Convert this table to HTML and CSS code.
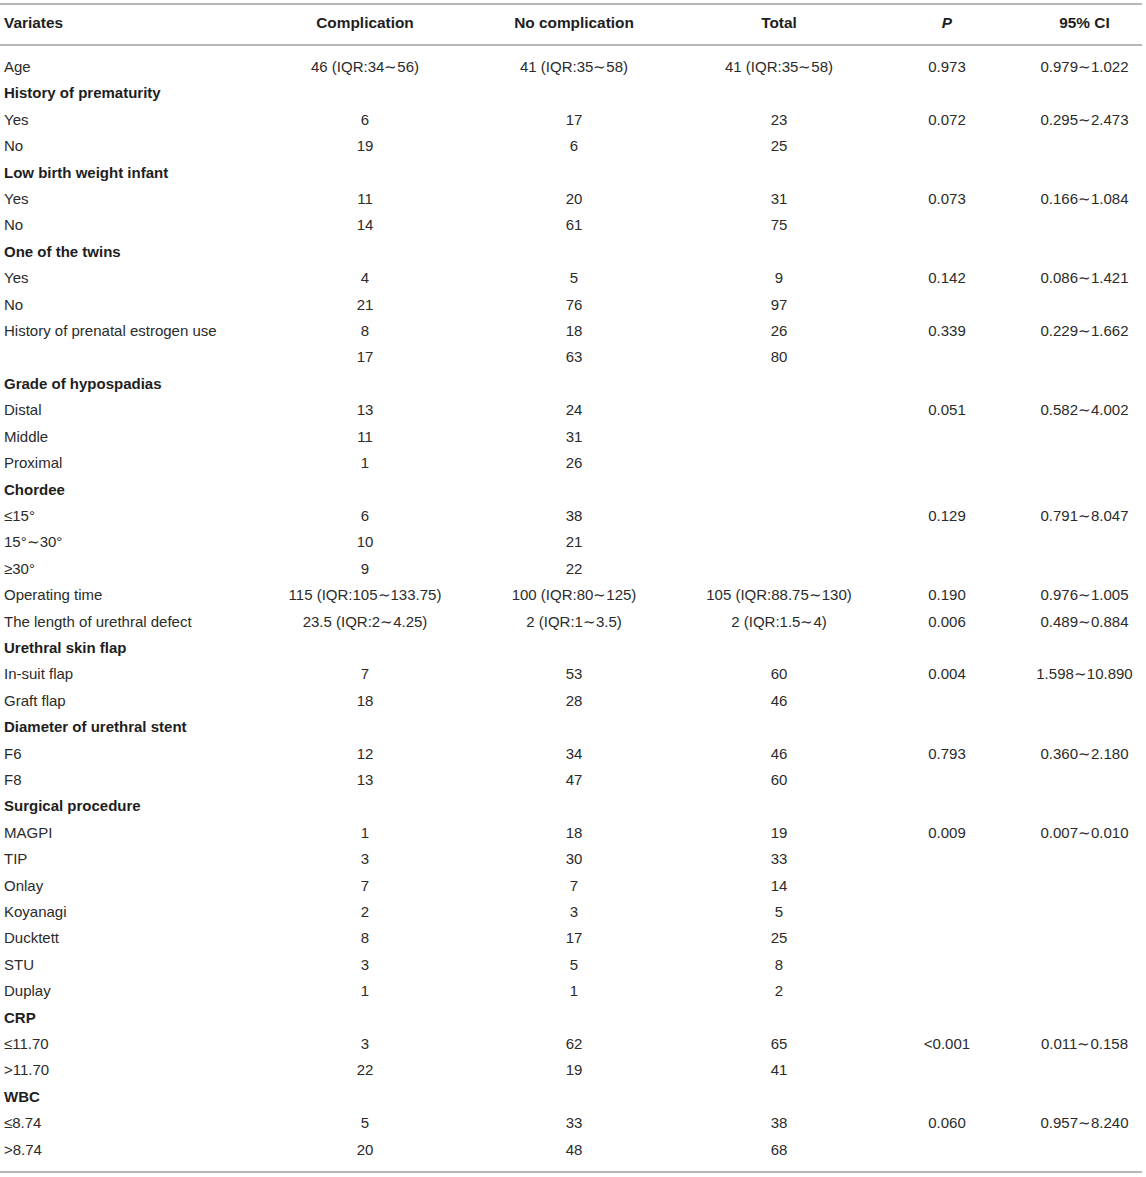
FILE: index.html
```html
<!DOCTYPE html>
<html lang="en">
<head>
<meta charset="utf-8">
<title>Table</title>
<link rel="stylesheet" href="styles.css">
</head>
<body>
<table class="data">
  <colgroup>
    <col class="c-var"><col class="c-comp"><col class="c-nocomp"><col class="c-total"><col class="c-p"><col class="c-ci">
  </colgroup>
  <thead>
    <tr><th class="left">Variates</th><th>Complication</th><th>No complication</th><th>Total</th><th><i>P</i></th><th class="ci">95% CI</th></tr>
  </thead>
  <tbody>
    <tr><td class="left">Age</td><td>46 (IQR:34∼56)</td><td>41 (IQR:35∼58)</td><td>41 (IQR:35∼58)</td><td>0.973</td><td class="ci">0.979∼1.022</td></tr>
    <tr class="group"><td class="left">History of prematurity</td><td></td><td></td><td></td><td></td><td class="ci"></td></tr>
    <tr><td class="left">Yes</td><td>6</td><td>17</td><td>23</td><td>0.072</td><td class="ci">0.295∼2.473</td></tr>
    <tr><td class="left">No</td><td>19</td><td>6</td><td>25</td><td></td><td class="ci"></td></tr>
    <tr class="group"><td class="left">Low birth weight infant</td><td></td><td></td><td></td><td></td><td class="ci"></td></tr>
    <tr><td class="left">Yes</td><td>11</td><td>20</td><td>31</td><td>0.073</td><td class="ci">0.166∼1.084</td></tr>
    <tr><td class="left">No</td><td>14</td><td>61</td><td>75</td><td></td><td class="ci"></td></tr>
    <tr class="group"><td class="left">One of the twins</td><td></td><td></td><td></td><td></td><td class="ci"></td></tr>
    <tr><td class="left">Yes</td><td>4</td><td>5</td><td>9</td><td>0.142</td><td class="ci">0.086∼1.421</td></tr>
    <tr><td class="left">No</td><td>21</td><td>76</td><td>97</td><td></td><td class="ci"></td></tr>
    <tr><td class="left">History of prenatal estrogen use</td><td>8</td><td>18</td><td>26</td><td>0.339</td><td class="ci">0.229∼1.662</td></tr>
    <tr><td class="left"></td><td>17</td><td>63</td><td>80</td><td></td><td class="ci"></td></tr>
    <tr class="group"><td class="left">Grade of hypospadias</td><td></td><td></td><td></td><td></td><td class="ci"></td></tr>
    <tr><td class="left">Distal</td><td>13</td><td>24</td><td></td><td>0.051</td><td class="ci">0.582∼4.002</td></tr>
    <tr><td class="left">Middle</td><td>11</td><td>31</td><td></td><td></td><td class="ci"></td></tr>
    <tr><td class="left">Proximal</td><td>1</td><td>26</td><td></td><td></td><td class="ci"></td></tr>
    <tr class="group"><td class="left">Chordee</td><td></td><td></td><td></td><td></td><td class="ci"></td></tr>
    <tr><td class="left">≤15°</td><td>6</td><td>38</td><td></td><td>0.129</td><td class="ci">0.791∼8.047</td></tr>
    <tr><td class="left">15°∼30°</td><td>10</td><td>21</td><td></td><td></td><td class="ci"></td></tr>
    <tr><td class="left">≥30°</td><td>9</td><td>22</td><td></td><td></td><td class="ci"></td></tr>
    <tr><td class="left">Operating time</td><td>115 (IQR:105∼133.75)</td><td>100 (IQR:80∼125)</td><td>105 (IQR:88.75∼130)</td><td>0.190</td><td class="ci">0.976∼1.005</td></tr>
    <tr><td class="left">The length of urethral defect</td><td>23.5 (IQR:2∼4.25)</td><td>2 (IQR:1∼3.5)</td><td>2 (IQR:1.5∼4)</td><td>0.006</td><td class="ci">0.489∼0.884</td></tr>
    <tr class="group"><td class="left">Urethral skin flap</td><td></td><td></td><td></td><td></td><td class="ci"></td></tr>
    <tr><td class="left">In-suit flap</td><td>7</td><td>53</td><td>60</td><td>0.004</td><td class="ci">1.598∼10.890</td></tr>
    <tr><td class="left">Graft flap</td><td>18</td><td>28</td><td>46</td><td></td><td class="ci"></td></tr>
    <tr class="group"><td class="left">Diameter of urethral stent</td><td></td><td></td><td></td><td></td><td class="ci"></td></tr>
    <tr><td class="left">F6</td><td>12</td><td>34</td><td>46</td><td>0.793</td><td class="ci">0.360∼2.180</td></tr>
    <tr><td class="left">F8</td><td>13</td><td>47</td><td>60</td><td></td><td class="ci"></td></tr>
    <tr class="group"><td class="left">Surgical procedure</td><td></td><td></td><td></td><td></td><td class="ci"></td></tr>
    <tr><td class="left">MAGPI</td><td>1</td><td>18</td><td>19</td><td>0.009</td><td class="ci">0.007∼0.010</td></tr>
    <tr><td class="left">TIP</td><td>3</td><td>30</td><td>33</td><td></td><td class="ci"></td></tr>
    <tr><td class="left">Onlay</td><td>7</td><td>7</td><td>14</td><td></td><td class="ci"></td></tr>
    <tr><td class="left">Koyanagi</td><td>2</td><td>3</td><td>5</td><td></td><td class="ci"></td></tr>
    <tr><td class="left">Ducktett</td><td>8</td><td>17</td><td>25</td><td></td><td class="ci"></td></tr>
    <tr><td class="left">STU</td><td>3</td><td>5</td><td>8</td><td></td><td class="ci"></td></tr>
    <tr><td class="left">Duplay</td><td>1</td><td>1</td><td>2</td><td></td><td class="ci"></td></tr>
    <tr class="group"><td class="left">CRP</td><td></td><td></td><td></td><td></td><td class="ci"></td></tr>
    <tr><td class="left">≤11.70</td><td>3</td><td>62</td><td>65</td><td>&lt;0.001</td><td class="ci">0.011∼0.158</td></tr>
    <tr><td class="left">&gt;11.70</td><td>22</td><td>19</td><td>41</td><td></td><td class="ci"></td></tr>
    <tr class="group"><td class="left">WBC</td><td></td><td></td><td></td><td></td><td class="ci"></td></tr>
    <tr><td class="left">≤8.74</td><td>5</td><td>33</td><td>38</td><td>0.060</td><td class="ci">0.957∼8.240</td></tr>
    <tr><td class="left">&gt;8.74</td><td>20</td><td>48</td><td>68</td><td></td><td class="ci"></td></tr>
  </tbody>
</table>
</body>
</html>
```

FILE: styles.css
```css
html, body {
  margin: 0;
  padding: 0;
  background: #ffffff;
}

body {
  font-family: "Liberation Sans", Arial, sans-serif;
  font-size: 15px;
  color: #2b2b2b;
}

.data {
  width: 1142px;
  margin-top: 3px;
  border-collapse: collapse;
  table-layout: fixed;
}

.c-var { width: 262px; }
.c-comp { width: 206px; }
.c-nocomp { width: 212px; }
.c-total { width: 198px; }
.c-p { width: 138px; }
.c-ci { width: 126px; }

.data th,
.data td {
  padding: 0;
  text-align: center;
  white-space: nowrap;
}

.data th {
  font-weight: bold;
  font-size: 15.4px;
  color: #1e1e1e;
  border-top: 2px solid #b8b8b8;
  border-bottom: 2px solid #b8b8b8;
  padding-top: 7px;
  padding-bottom: 11px;
  line-height: 21px;
}

.data td {
  line-height: 26.4px;
  vertical-align: top;
}

.data .left {
  text-align: left;
  padding-left: 4px;
}

.data .ci {
  padding-left: 11px;
}

.data tbody tr:first-child td {
  padding-top: 8px;
}

.data tbody tr:last-child td {
  padding-bottom: 8px;
  border-bottom: 2px solid #b8b8b8;
}

.data .group .left {
  font-weight: bold;
  color: #1e1e1e;
}
```
